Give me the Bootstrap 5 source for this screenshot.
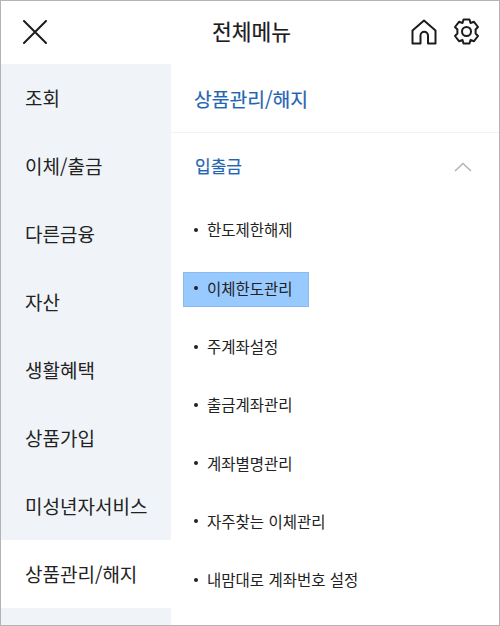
<!DOCTYPE html>
<html lang="ko">
<head>
    <meta charset="UTF-8">
    <meta name="viewport" content="width=device-width, initial-scale=1.0">
    <title>전체메뉴</title>
    <link href="https://cdn.jsdelivr.net/npm/bootstrap@5.3.1/dist/css/bootstrap.min.css" rel="stylesheet">
    <style>
        html, body { height: 100%; }
        body {
            font-family: "Noto Sans CJK KR", "Noto Sans", sans-serif;
            color: #1c1c1c;
            overflow: hidden;
        }
        .menu-frame {
            width: 500px;
            height: 626px;
            border: 1px solid #b4b4b4;
        }
        .menu-top {
            height: 63px;
            padding: 0 19px 2px 22px;
        }
        .top-side { flex: 1 1 0; }
        .menu-title {
            font-size: 21.5px;
            font-weight: 400;
            -webkit-text-stroke: 0.2px #1c1c1c;
        }
        .top-icons { gap: 16px; }
        .menu-body { height: 561px; }
        .side-col { width: 170px; background: #f0f4f8; }
        .side-item {
            height: 68px;
            padding-left: 24px;
            font-size: 19px;
            color: #222;
        }
        .side-item.is-on { background: #fff; }
        .main-col { width: 329px; }
        .main-head {
            height: 69px;
            padding: 2px 0 0 23px;
            font-size: 19.3px;
            font-weight: 400;
            -webkit-text-stroke: 0.2px #1f66b3;
            color: #1f66b3;
            border-bottom: 1px solid #f3f3f3;
        }
        .sub-head {
            height: 67px;
            padding: 0 27px 0 24px;
            font-size: 17px;
            font-weight: 400;
            color: #1f66b3;
        }
        .sub-head span {
            margin-bottom: 2px;
            -webkit-text-stroke: 0.2px #1f66b3;
        }
        .sub-list { padding: 14px 0 0 12px; }
        .sub-item {
            height: 35px;
            width: 126px;
            margin-bottom: 23.3px;
            padding: 0 0 3px 11px;
            font-size: 15.5px;
            white-space: nowrap;
            color: #222;
        }
        .sub-item::before {
            content: "";
            width: 4px;
            height: 4px;
            border-radius: 50%;
            background: #222;
            margin-right: 9px;
            flex: none;
        }
        .sub-item.is-on {
            background: #99caff;
            box-shadow: inset 0 0 0 1px #8abbed;
        }
    </style>
</head>
<body class="bg-white">
    <div class="menu-frame d-flex flex-column">
        <!-- top bar -->
        <div class="menu-top d-flex align-items-center flex-shrink-0">
            <div class="top-side d-flex">
                <svg width="24" height="24" viewBox="0 0 24 24" fill="none" stroke="#1c1c1c" stroke-width="2" stroke-linecap="round">
                    <path d="M1 1L23 23M23 1L1 23"/>
                </svg>
            </div>
            <div class="menu-title">전체메뉴</div>
            <div class="top-side top-icons d-flex align-items-center justify-content-end">
                <svg width="26" height="26" viewBox="0 0 26 26" fill="none" stroke="#1c1c1c" stroke-width="2" stroke-linejoin="round">
                    <path d="M1.5 11.5L13 1.5L24.5 11.5V24.5H17V16.5A3.5 3.5 0 0 0 9.5 16.5V24.5H1.5Z"/>
                </svg>
                <svg width="27" height="27" viewBox="0 0 27 27" fill="none" stroke="#1c1c1c" stroke-width="2" stroke-linejoin="round">
                    <circle cx="13.5" cy="13.5" r="4.5"/>
                    <path d="M10.5 1.5H16.5L17.5 5L21 3.8L25 9L22.6 11.5V15.5L25 18L21 23.2L17.5 22L16.5 25.5H10.5L9.5 22L6 23.2L2 18L4.4 15.5V11.5L2 9L6 3.8L9.5 5Z"/>
                </svg>
            </div>
        </div>

        <div class="menu-body d-flex">
            <!-- left categories -->
            <div class="side-col flex-shrink-0">
                <div class="side-item d-flex align-items-center">조회</div>
                <div class="side-item d-flex align-items-center">이체/출금</div>
                <div class="side-item d-flex align-items-center">다른금융</div>
                <div class="side-item d-flex align-items-center">자산</div>
                <div class="side-item d-flex align-items-center">생활혜택</div>
                <div class="side-item d-flex align-items-center">상품가입</div>
                <div class="side-item d-flex align-items-center">미성년자서비스</div>
                <div class="side-item is-on d-flex align-items-center">상품관리/해지</div>
            </div>

            <!-- right submenu -->
            <div class="main-col">
                <div class="main-head d-flex align-items-center">상품관리/해지</div>
                <div class="sub-head d-flex align-items-center justify-content-between">
                    <span>입출금</span>
                    <svg width="18" height="10" viewBox="0 0 18 10" fill="none" stroke="#b5b5b5" stroke-width="1.6">
                        <path d="M1 9L9 1.5L17 9"/>
                    </svg>
                </div>
                <div class="sub-list">
                    <div class="sub-item d-flex align-items-center">한도제한해제</div>
                    <div class="sub-item is-on d-flex align-items-center">이체한도관리</div>
                    <div class="sub-item d-flex align-items-center">주계좌설정</div>
                    <div class="sub-item d-flex align-items-center">출금계좌관리</div>
                    <div class="sub-item d-flex align-items-center">계좌별명관리</div>
                    <div class="sub-item d-flex align-items-center">자주찾는 이체관리</div>
                    <div class="sub-item d-flex align-items-center">내맘대로 계좌번호 설정</div>
                </div>
            </div>
        </div>
    </div>
    <script src="https://cdn.jsdelivr.net/npm/bootstrap@5.3.1/dist/js/bootstrap.bundle.min.js"></script>
</body>
</html>
